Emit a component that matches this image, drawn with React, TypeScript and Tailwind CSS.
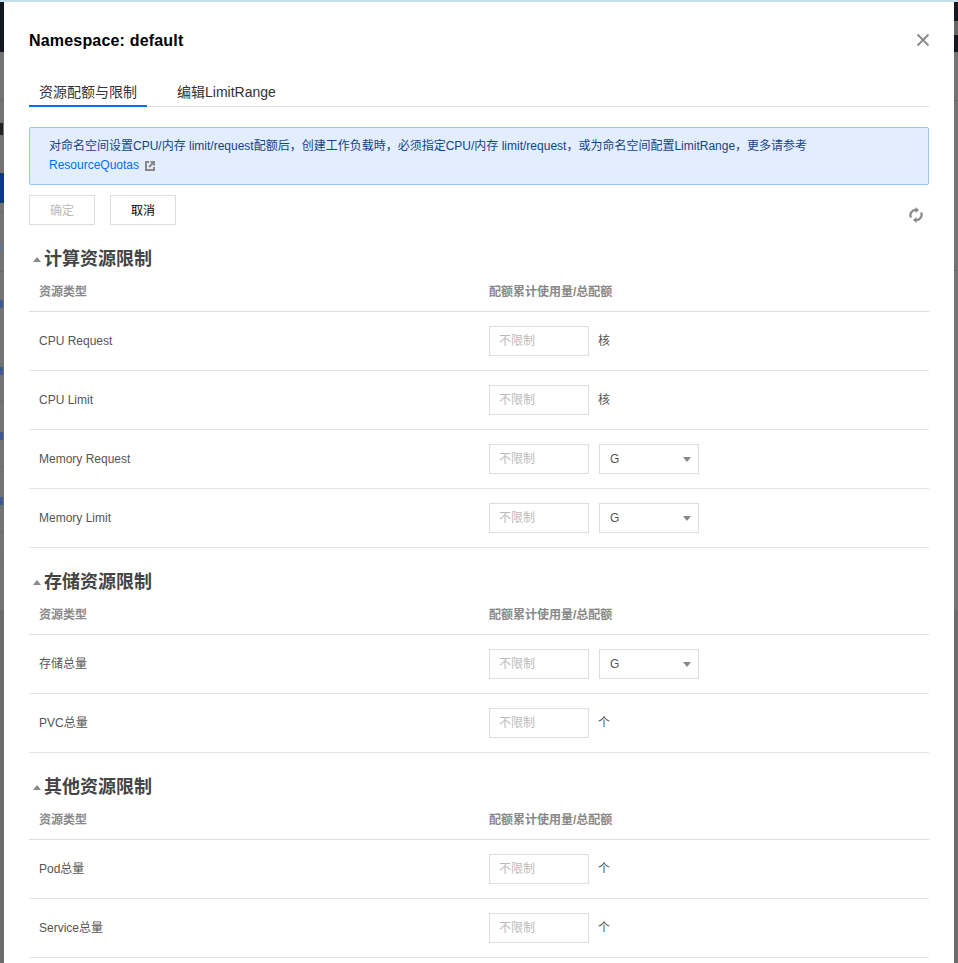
const cjkFont = "font-['Liberation_Sans','Noto_Sans_CJK_SC',sans-serif]"

type Row = {
  name: string
  unit?: string
  select?: boolean
}

const sections: { title: string; rows: Row[] }[] = [
  {
    title: '计算资源限制',
    rows: [
      { name: 'CPU Request', unit: '核' },
      { name: 'CPU Limit', unit: '核' },
      { name: 'Memory Request', select: true },
      { name: 'Memory Limit', select: true },
    ],
  },
  {
    title: '存储资源限制',
    rows: [
      { name: '存储总量', select: true },
      { name: 'PVC总量', unit: '个' },
    ],
  },
  {
    title: '其他资源限制',
    rows: [
      { name: 'Pod总量', unit: '个' },
      { name: 'Service总量', unit: '个' },
    ],
  },
]

// what shows of the page behind the dialog
function LeftStrip() {
  return (
    <div className="flex h-full w-[4px] shrink-0 flex-col bg-[#737373]">
      <div className="h-[50px] shrink-0 bg-[#14181f]" />
      <div className="h-[49px] shrink-0 border-b border-[#666]" />
      <div className="mt-[22px] h-[12px] w-[3px] shrink-0 bg-[#222]" />
      <div className="h-[38px] shrink-0" />
      <div className="h-[30px] shrink-0 bg-[#0b3a84]" />
      <div className="h-[9px] shrink-0 border-b border-[#696969]" />
      <div className="mt-[31px] h-[8px] w-[2px] shrink-0 bg-[#66758f]" />
      <div className="h-[21px] shrink-0 border-b border-[#696969]" />
      <div className="mt-[28px] h-[8px] w-[3px] shrink-0 bg-[#3f5a92]" />
      <div className="h-[59px] shrink-0" />
      <div className="h-[8px] w-[3px] shrink-0 bg-[#3f5a92]" />
      <div className="h-[27px] shrink-0 border-b border-[#696969]" />
      <div className="mt-[30px] h-[8px] w-[3px] shrink-0 bg-[#3f5a92]" />
      <div className="h-[27px] shrink-0 border-b border-[#696969]" />
      <div className="mt-[30px] h-[8px] w-[3px] shrink-0 bg-[#3f5a92]" />
      <div className="h-[27px] shrink-0 border-b border-[#696969]" />
      <div className="ml-[3px] mt-[20px] h-px w-px shrink-0 bg-[#7a5f40]" />
      <div className="ml-[3px] mt-[9px] h-px w-px shrink-0 bg-[#7a5f40]" />
      <div className="mt-[47px] min-h-0 flex-1 bg-[#6c6c6c]" />
    </div>
  )
}

function RightStrip() {
  return (
    <div className="flex h-full w-[4px] shrink-0 flex-col bg-[#737373]">
      <div className="h-[50px] shrink-0 bg-[#14181f] pt-[19px]">
        <div className="h-[14px] bg-[#666]" />
      </div>
      <div className="h-[49px] shrink-0 border-b border-[#666]" />
      <div className="h-[170px] shrink-0 border-b border-[#696969]" />
      <div className="mt-[339px] min-h-0 flex-1 bg-[#6c6c6c]" />
    </div>
  )
}

function ResourceRow({ row }: { row: Row }) {
  return (
    <div className="flex h-[59px] items-center border-b border-[#e5e5e5] pl-[10px] text-xs text-[#555]">
      <div className="w-[450px] shrink-0">{row.name}</div>
      <div className="flex h-[30px] w-[100px] items-center border border-[#ddd] pl-[9px] text-[#bbb]">
        不限制
      </div>
      {row.select ? (
        <div className="ml-[10px] flex h-[30px] w-[100px] items-center justify-between border border-[#ddd] pl-[10px] pr-[7px]">
          G
          <span className="h-0 w-0 border-x-[4px] border-t-[5px] border-x-transparent border-t-[#888]" />
        </div>
      ) : (
        <span className="ml-[9px]">{row.unit}</span>
      )}
    </div>
  )
}

function Section({ title, rows }: { title: string; rows: Row[] }) {
  return (
    <section>
      <div className="flex h-[34px] items-center">
        <span className="ml-[4px] mr-[3px] h-0 w-0 border-x-[4px] border-b-[5px] border-x-transparent border-b-[#888]" />
        <h3 className="text-[18px] leading-6 font-bold text-[#444]">{title}</h3>
      </div>
      <div className="flex h-[36px] items-center border-b border-[#ddd] pb-[3px] pl-[10px] text-xs font-bold text-[#888]">
        <div className="w-[450px] shrink-0">资源类型</div>
        <div>配额累计使用量/总配额</div>
      </div>
      {rows.map((row) => (
        <ResourceRow key={row.name} row={row} />
      ))}
    </section>
  )
}

export default function App() {
  return (
    <div className={`flex h-[963px] flex-col overflow-hidden ${cjkFont}`}>
      <div className="h-[2px] shrink-0 bg-[#c3deee]" />
      <div className="flex min-h-0 flex-1">
        <LeftStrip />
        <main className="min-w-0 flex-1 bg-white px-[25px]">
          <div className="flex h-[76px] items-center justify-between">
            <h2 className="pt-[2px] text-base font-bold tracking-[0.18px] text-black">Namespace: default</h2>
            <svg width="14" height="14" viewBox="0 0 14 14" className="mr-[-1px] text-[#888]">
              <path d="M1.5 1.5 12.5 12.5M12.5 1.5 1.5 12.5" stroke="currentColor" strokeWidth="1.8" fill="none" />
            </svg>
          </div>

          <div className="flex h-[29px] border-b border-[#ddd] text-sm leading-[28px] text-[#333]">
            <div className="-mb-px flex w-[118px] items-start justify-center border-b-2 border-[#006eff]">
              资源配额与限制
            </div>
            <div className="ml-[30px]">编辑LimitRange</div>
          </div>

          <div className="mt-[20px] h-[58px] rounded-[2px] border border-[#97c7ff] bg-[#e2eefd] px-[20px] pt-[8px] text-xs leading-[19px] text-[#15428b]">
            <p className="-ml-px pt-px">
              对命名空间设置CPU/内存 limit/request配额后，创建工作负载時，必须指定CPU/内存 limit/request，或为命名空间配置LimitRange，更多请参考
            </p>
            <p className="-ml-px flex items-center">
              <span className="text-[#006eff]">ResourceQuotas</span>
              <svg width="10" height="10" viewBox="0 0 10 10" className="ml-[6px] text-[#888]">
                <path d="M4 1H1v8h8V6" stroke="currentColor" strokeWidth="2" fill="none" />
                <path d="M5.5 0H10v4.5H8V3.4L4.7 6.7 3.3 5.3 6.6 2H5.5z" fill="currentColor" />
              </svg>
            </p>
          </div>

          <div className="mt-[10px] flex h-[30px] items-center justify-between text-xs">
            <div className="flex gap-[15px]">
              <button className="h-[30px] w-[66px] border border-[#ddd] pt-px text-[#bbb]">确定</button>
              <button className="h-[30px] w-[66px] border border-[#ddd] pt-px text-black">取消</button>
            </div>
            <svg width="14" height="16" viewBox="0 0 14 16" className="mr-[6px] mt-[10px] text-[#888]">
              <path d="M2 10.5A5.2 5.2 0 0 1 7.5 3" stroke="currentColor" strokeWidth="2.2" fill="none" />
              <path d="M12 5.5A5.2 5.2 0 0 1 6.5 13" stroke="currentColor" strokeWidth="2.2" fill="none" />
              <path d="M6.5 0v6L10 3zM7.5 10v6L4 13z" fill="currentColor" />
            </svg>
          </div>

          <div className="mt-[17px] flex flex-col gap-[17px]">
            {sections.map((section) => (
              <Section key={section.title} title={section.title} rows={section.rows} />
            ))}
          </div>
        </main>
        <RightStrip />
      </div>
    </div>
  )
}
